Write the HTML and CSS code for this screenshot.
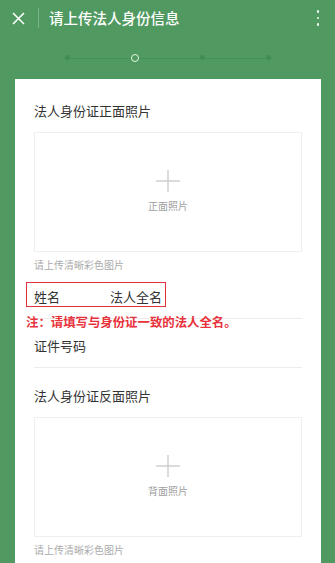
FILE: index.html
```html
<!DOCTYPE html>
<html lang="zh-CN">
<head>
<meta charset="utf-8">
<title>请上传法人身份信息</title>
<link rel="stylesheet" href="styles.css">
</head>
<body>
<header class="topbar">
  <svg class="close" width="13" height="13" viewBox="0 0 13 13"><path d="M1 1 L12 12 M12 1 L1 12" stroke="#fff" stroke-width="1.6" fill="none"/></svg>
  <span class="divider"></span>
  <h1 class="title">请上传法人身份信息</h1>
  <span class="more"><i></i><i></i><i></i></span>
</header>
<div class="steps">
  <div class="track">
    <span class="dot"></span>
    <span class="dot current"></span>
    <span class="dot"></span>
    <span class="dot"></span>
  </div>
</div>
<main class="card">
  <section class="photo">
    <div class="section-title">法人身份证正面照片</div>
    <div class="upload">
      <svg width="24" height="22" viewBox="0 0 24 22"><path d="M12 0 V22 M0 11 H24" stroke="#cfcfcf" stroke-width="1.5" fill="none"/></svg>
      <span class="upload-label">正面照片</span>
    </div>
    <div class="hint">请上传清晰彩色图片</div>
  </section>
  <div class="field"><span class="label">姓名</span><span class="value">法人全名</span></div>
  <div class="field"><span class="label">证件号码</span></div>
  <section class="photo">
    <div class="section-title">法人身份证反面照片</div>
    <div class="upload">
      <svg width="24" height="22" viewBox="0 0 24 22"><path d="M12 0 V22 M0 11 H24" stroke="#cfcfcf" stroke-width="1.5" fill="none"/></svg>
      <span class="upload-label">背面照片</span>
    </div>
    <div class="hint">请上传清晰彩色图片</div>
  </section>
  <div class="mark-box"></div>
  <div class="mark-note">注：请填写与身份证一致的法人全名。</div>
</main>
</body>
</html>
```
FILE: styles.css
```css
html, body {
  margin: 0;
  padding: 0;
}
body {
  background: #509a61;
  font-family: "Noto Sans CJK SC", "Noto Sans", sans-serif;
  color: #333;
  overflow: hidden;
  height: 563px;
}
.topbar {
  height: 36px;
  display: flex;
  align-items: center;
  padding-left: 12px;
  padding-right: 16px;
}
.close {
  display: block;
}
.divider {
  width: 1px;
  height: 20px;
  background: rgba(255,255,255,0.25);
  margin-left: 13px;
}
.title {
  margin: 0 0 0 10px;
  font-size: 14.5px;
  font-weight: 500;
  color: #fff;
  line-height: 20px;
}
.more {
  margin-left: auto;
  display: flex;
  flex-direction: column;
  gap: 4px;
}
.more i {
  display: block;
  width: 2.5px;
  height: 2.5px;
  border-radius: 50%;
  background: #f2fff2;
}
.steps {
  height: 43px;
  display: flex;
  justify-content: center;
  align-items: center;
}
.track {
  position: relative;
  width: 206px;
  display: flex;
  justify-content: space-between;
  align-items: center;
}
.track::before {
  content: "";
  position: absolute;
  left: 2px;
  right: 2px;
  top: 50%;
  height: 1px;
  background: #45905a;
}
.dot {
  position: relative;
  width: 5px;
  height: 5px;
  border-radius: 50%;
  background: #428c55;
}
.dot.current {
  width: 6px;
  height: 6px;
  background: #509a61;
  border: 1.6px solid #e4f7e4;
}
.card {
  position: relative;
  background: #fff;
  margin: 0 14px 0 15px;
  padding: 22px 19px 20px 19px;
}
.section-title {
  font-size: 13px;
  line-height: 20px;
  color: #333;
}
.upload {
  margin-top: 11px;
  height: 116px;
  border: 1px solid #efefef;
  display: flex;
  flex-direction: column;
  align-items: center;
  justify-content: center;
  gap: 7px;
  padding-bottom: 2px;
}
.upload svg {
  display: block;
}
.upload-label {
  font-size: 10px;
  line-height: 14px;
  color: #a0a0a0;
}
.hint {
  margin-top: 6px;
  font-size: 10px;
  line-height: 14px;
  color: #ababab;
}
.field {
  display: flex;
  font-size: 13px;
  line-height: 20px;
  padding: 15px 0 11px;
  border-bottom: 1px solid #ececec;
}
.field + .field {
  padding-top: 17px;
}
.label {
  width: 76px;
}
.value {
  color: #333;
}
.field + .photo {
  padding-top: 18px;
}
.mark-box {
  position: absolute;
  left: 11px;
  top: 203px;
  width: 138px;
  height: 23px;
  border: 1.5px solid #e0313a;
}
.mark-note {
  position: absolute;
  left: 11px;
  top: 235px;
  font-size: 12.4px;
  line-height: 17px;
  font-weight: 700;
  color: #e8323c;
  background: transparent;
}
```
